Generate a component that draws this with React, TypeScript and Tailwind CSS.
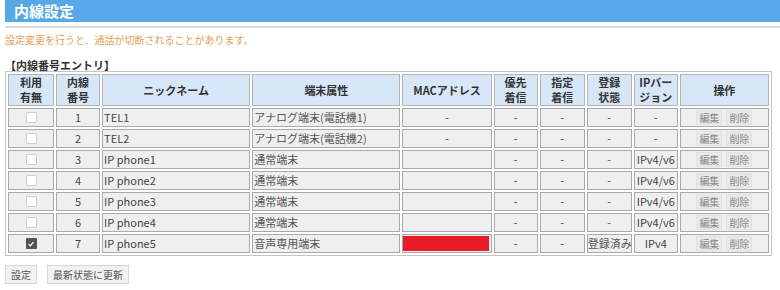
import React from "react";

type Row = {
  no: number;
  name: string;
  kind: string;
  mac: string | null;
  reg: string;
  ip: string;
  on: boolean;
};

const rows: Row[] = [
  { no: 1, name: "TEL1", kind: "アナログ端末(電話機1)", mac: "-", reg: "-", ip: "-", on: false },
  { no: 2, name: "TEL2", kind: "アナログ端末(電話機2)", mac: "-", reg: "-", ip: "-", on: false },
  { no: 3, name: "IP phone1", kind: "通常端末", mac: "", reg: "-", ip: "IPv4/v6", on: false },
  { no: 4, name: "IP phone2", kind: "通常端末", mac: "", reg: "-", ip: "IPv4/v6", on: false },
  { no: 5, name: "IP phone3", kind: "通常端末", mac: "", reg: "-", ip: "IPv4/v6", on: false },
  { no: 6, name: "IP phone4", kind: "通常端末", mac: "", reg: "-", ip: "IPv4/v6", on: false },
  { no: 7, name: "IP phone5", kind: "音声専用端末", mac: null, reg: "登録済み", ip: "IPv4", on: true },
];

const th =
  "h-[32px] border border-[#b4b4b4] bg-[#d7e7f8] text-[11px] font-bold leading-[15px] text-[#333] text-center align-middle p-0";
const td =
  "h-[19px] border border-[#a9a9a9] bg-[#efefef] text-[11px] leading-[17px] text-[#444] p-0 align-middle whitespace-nowrap overflow-hidden";

function Checkbox({ on }: { on: boolean }) {
  if (on) {
    return (
      <span className="mx-auto flex h-[11px] w-[11px] items-center justify-center rounded-[1px] bg-[#555]">
        <svg viewBox="0 0 10 10" className="h-[8px] w-[8px]">
          <path d="M2 5.2 L4.2 7.3 L8 2.6" fill="none" stroke="#fff" strokeWidth="1.6" />
        </svg>
      </span>
    );
  }
  return <span className="mx-auto block h-[11px] w-[11px] rounded-[1px] border border-[#cfcfcf] bg-white" />;
}

function SmallBtn({ label }: { label: string }) {
  return (
    <span className="flex h-[15px] w-[26px] items-center justify-center border border-[#e2e2e2] bg-[#e9e9e9] text-[10px] leading-[13px] text-[#8a8a8a]">
      {label}
    </span>
  );
}

export default function App() {
  return (
    <div
      className="h-[290px] w-[780px] overflow-hidden bg-white"
      style={{ fontFamily: '"Noto Sans CJK JP", "Liberation Sans", sans-serif' }}
    >
      {/* Title bar */}
      <div className="ml-[5px] flex h-[22px] items-center bg-[#56a8e9] pl-[9px] text-[15px] font-bold leading-[20px] text-white">
        内線設定
      </div>
      <div className="ml-[5px] mt-[4px] h-[2px] bg-[#dcdcdc]" />

      <div className="px-[5px]">
        <p className="mt-[5px] text-[10px] leading-[14px] text-[#e3a253]">
          設定変更を行うと、通話が切断されることがあります。
        </p>
        <p className="mt-[11px] text-[11px] font-bold leading-[14px] text-[#333]">【内線番号エントリ】</p>

        <table className="mt-[-1px] w-[767px] table-fixed border-separate border-spacing-[2px] border border-[#c4c4c4]">
          <colgroup>
            <col className="w-[46px]" />
            <col className="w-[44px]" />
            <col className="w-[148px]" />
            <col className="w-[148px]" />
            <col className="w-[89px]" />
            <col className="w-[44px]" />
            <col className="w-[45px]" />
            <col className="w-[45px]" />
            <col className="w-[44px]" />
            <col className="w-[89px]" />
          </colgroup>
          <thead>
            <tr>
              <th className={th}>利用<br />有無</th>
              <th className={th}>内線<br />番号</th>
              <th className={th}>ニックネーム</th>
              <th className={th}>端末属性</th>
              <th className={th}>MACアドレス</th>
              <th className={th}>優先<br />着信</th>
              <th className={th}>指定<br />着信</th>
              <th className={th}>登録<br />状態</th>
              <th className={th}>IPバー<br />ジョン</th>
              <th className={th}>操作</th>
            </tr>
          </thead>
          <tbody>
            {rows.map((r) => (
              <tr key={r.no}>
                <td className={td}>
                  <Checkbox on={r.on} />
                </td>
                <td className={`${td} text-center`}>{r.no}</td>
                <td className={`${td} pl-[1px]`}>{r.name}</td>
                <td className={`${td} pl-[1px] text-[#555]`}>{r.kind}</td>
                <td className={`${td} text-center`}>
                  {r.mac === null ? (
                    <span className="block h-[15px] w-[86px] bg-[#e81c26]" />
                  ) : (
                    r.mac
                  )}
                </td>
                <td className={`${td} text-center`}>-</td>
                <td className={`${td} text-center`}>-</td>
                <td className={`${td} text-center text-[9.5px] text-[#555]`}>{r.reg}</td>
                <td className={`${td} text-center text-[10px]`}>{r.ip}</td>
                <td className={td}>
                  <div className="flex items-center justify-center gap-[4px]">
                    <SmallBtn label="編集" />
                    <SmallBtn label="削除" />
                  </div>
                </td>
              </tr>
            ))}
          </tbody>
        </table>

        <div className="mt-[9px] flex gap-[10px]">
          <button className="h-[19px] border border-[#d6d6d6] bg-[#f2f2f2] px-[5px] text-[10px] leading-[17px] text-[#555]">
            設定
          </button>
          <button className="h-[19px] border border-[#d6d6d6] bg-[#f2f2f2] px-[5px] text-[10px] leading-[17px] text-[#555]">
            最新状態に更新
          </button>
        </div>
      </div>
    </div>
  );
}
